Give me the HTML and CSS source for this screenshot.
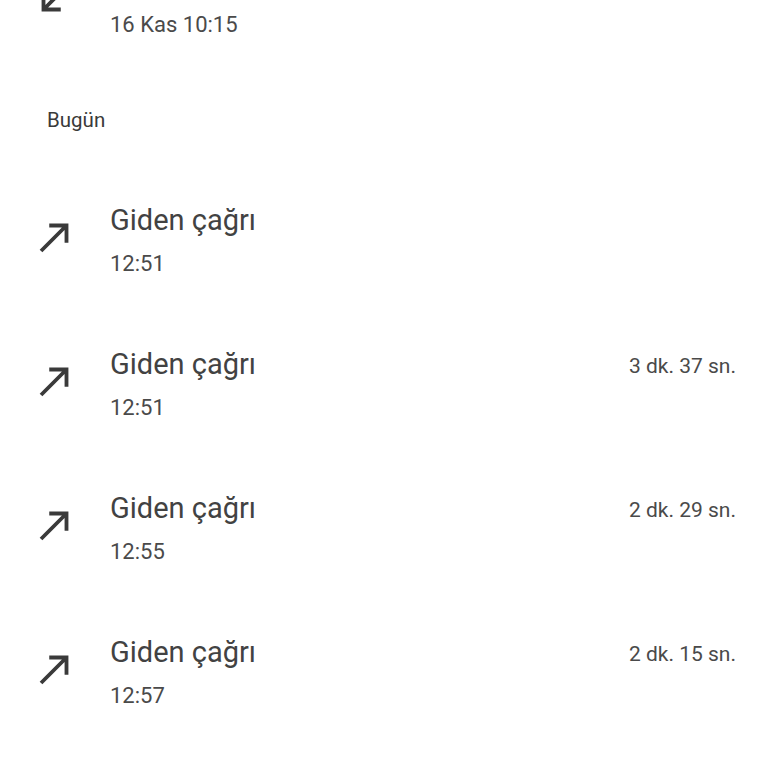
FILE: index.html
```html
<!DOCTYPE html>
<html lang="tr">
<head>
<meta charset="utf-8">
<link rel="stylesheet" href="styles.css">
</head>
<body>
<div class="list">
  <div class="row row-first">
    <svg class="icon icon-first" viewBox="0 0 24 24"><path d="M20 5.41L18.59 4 7 15.59V9H5v10h10v-2H8.41z"/></svg>
    <div class="text">
      <div class="sub">16 Kas 10:15</div>
    </div>
  </div>
  <div class="header">Bugün</div>
  <div class="row">
    <svg class="icon" viewBox="0 0 24 24"><path d="M9 5v2h6.59L4 18.59 5.41 20 17 8.41V15h2V5z"/></svg>
    <div class="text">
      <div class="title">Giden çağrı</div>
      <div class="sub">12:51</div>
    </div>
    <div class="dur"></div>
  </div>
  <div class="row">
    <svg class="icon" viewBox="0 0 24 24"><path d="M9 5v2h6.59L4 18.59 5.41 20 17 8.41V15h2V5z"/></svg>
    <div class="text">
      <div class="title">Giden çağrı</div>
      <div class="sub">12:51</div>
    </div>
    <div class="dur">3 dk. 37 sn.</div>
  </div>
  <div class="row">
    <svg class="icon" viewBox="0 0 24 24"><path d="M9 5v2h6.59L4 18.59 5.41 20 17 8.41V15h2V5z"/></svg>
    <div class="text">
      <div class="title">Giden çağrı</div>
      <div class="sub">12:55</div>
    </div>
    <div class="dur">2 dk. 29 sn.</div>
  </div>
  <div class="row">
    <svg class="icon" viewBox="0 0 24 24"><path d="M9 5v2h6.59L4 18.59 5.41 20 17 8.41V15h2V5z"/></svg>
    <div class="text">
      <div class="title">Giden çağrı</div>
      <div class="sub">12:57</div>
    </div>
    <div class="dur">2 dk. 15 sn.</div>
  </div>
</div>
</body>
</html>
```
FILE: styles.css
```css
html, body {
  margin: 0;
  padding: 0;
  background: #ffffff;
  overflow: hidden;
}
body {
  font-family: Roboto, "Noto Sans", sans-serif;
  color: #3c3c3c;
}
.list {
  display: flex;
  flex-direction: column;
}
.row {
  display: flex;
  align-items: flex-start;
  height: 144px;
  box-sizing: border-box;
  padding: 28px 32px 0 32px;
}
.row-first {
  height: 75px;
  padding-top: 3px;
}
.icon {
  width: 46px;
  height: 46px;
  fill: #3a3a3a;
  margin-top: 16px;
  flex: none;
}
.icon-first {
  margin-top: -28px;
}
.text {
  margin-left: 32px;
  flex: 1;
  display: flex;
  flex-direction: column;
}
.title {
  font-size: 29px;
  line-height: 44px;
  color: #424242;
}
.sub {
  font-size: 22px;
  line-height: 44px;
  color: #4a4a4a;
}
.dur {
  font-size: 21px;
  line-height: 44px;
  padding-top: 2px;
  color: #4a4a4a;
}
.header {
  height: 95px;
  box-sizing: border-box;
  padding: 33px 0 0 47px;
  font-size: 20.5px;
  line-height: 24px;
  color: #3a3a3a;
}
```
